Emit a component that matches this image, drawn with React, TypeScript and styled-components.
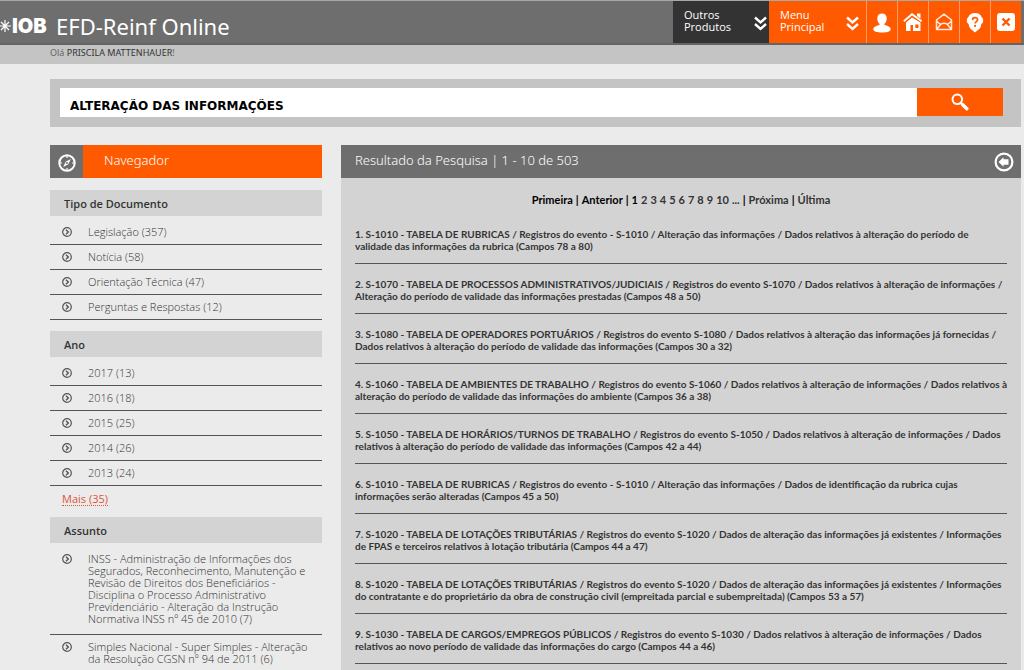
import React from "react";
import styled, { createGlobalStyle } from "styled-components";

const orange = "#ff5a00";
const gray = "#6e6e6e";

const GlobalStyle = createGlobalStyle`
  *, *::before, *::after { box-sizing: border-box; }
  body { margin: 0; background: #ebebeb; color: #333; font-family: "Noto Sans", "Open Sans", sans-serif; }
  a { color: inherit; text-decoration: none; }
  button { border: 0; padding: 0; font: inherit; cursor: pointer; }
  ul, ol { list-style: none; margin: 0; padding: 0; }
  h1, h2, h3 { margin: 0; font-weight: 400; }
`;

const Page = styled.div`
  display: flex;
  flex-direction: column;
  height: 100vh;
  overflow: hidden;
`;

const TopBar = styled.header`
  display: flex;
  flex: none;
  height: 45px;
  padding-right: 3px;
  background: ${gray};
  border-top: 1px solid #a5a9a8;
  border-bottom: 2px solid #646464;
`;

const Brand = styled.div`
  display: flex;
  align-items: center;
  flex: 1;
  padding-top: 8px;
  color: #fff;
  white-space: nowrap;
`;

const LogoText = styled.span`
  width: 44px;
  font: 900 20px/24px Inter, sans-serif;
`;

const Title = styled.h1`
  font-size: 22px;
  line-height: 28px;
`;

const Nav = styled.nav`
  display: flex;
  color: #fff;
`;

const MenuButton = styled.button<{ $dark?: boolean }>`
  display: flex;
  align-items: center;
  justify-content: space-between;
  width: ${(p) => (p.$dark ? 96 : 97)}px;
  padding: 0 ${(p) => (p.$dark ? 2 : 7)}px 2px 11px;
  background: ${(p) => (p.$dark ? "#333" : orange)};
  color: #fff;
  font-family: "Open Sans", sans-serif;
  font-size: 11px;
  line-height: 12px;
  text-align: left;
  svg { margin-top: 5px; }
`;

const IconButton = styled.button`
  display: flex;
  align-items: center;
  justify-content: center;
  width: 31px;
  background: ${orange};
  border-left: 1px solid #ff9c66;
  color: #fff;
`;

const Greeting = styled.p`
  flex: none;
  height: 19px;
  margin: 0 0 15px;
  padding-left: 50px;
  background: #c4c4c4;
  font-size: 9px;
  line-height: 16px;
`;

const Soft = styled.span`
  color: #666;
`;

const SearchForm = styled.form`
  display: flex;
  flex: none;
  margin: 0 3px 18px 50px;
  padding: 9px 18px 10px 10px;
  background: #c4c4c4;
`;

const SearchInput = styled.input`
  flex: 1;
  min-width: 0;
  height: 29px;
  padding: 7px 10px 0;
  border: 0;
  border-radius: 0;
  background: #fff;
  color: #000;
  font: 700 12px "DejaVu Sans", sans-serif;
`;

const SearchButton = styled.button`
  display: flex;
  align-items: center;
  justify-content: center;
  width: 86px;
  height: 28px;
  background: ${orange};
`;

const Columns = styled.div`
  display: flex;
  flex: 1;
  gap: 19px;
  min-height: 0;
  padding: 0 3px 0 50px;
`;

const Sidebar = styled.aside`
  flex: 0 0 272px;
`;

const PanelHead = styled.div<{ $color: string }>`
  display: flex;
  align-items: center;
  height: 33px;
  background: ${(p) => p.$color};
  color: #fff;
`;

const CompassBox = styled.span`
  display: flex;
  align-items: center;
  justify-content: center;
  width: 33px;
  height: 33px;
  padding-top: 3px;
  background: ${gray};
`;

const PanelTitle = styled.h2<{ $indent: number }>`
  flex: 1;
  padding: 0 0 4px ${(p) => p.$indent}px;
  font-size: 13px;
  font-weight: 300;
  line-height: 20px;
`;

const Group = styled.section`
  margin-top: 12px;
  & + & { margin-top: 11px; }
`;

const GroupTitle = styled.h3`
  height: 26px;
  padding: 2px 14px 0;
  background: #d3d3d3;
  font-family: "Open Sans", sans-serif;
  font-size: 11px;
  font-weight: 600;
  line-height: 24px;
`;

const FacetList = styled.ul`
  padding-top: 4px;
`;

const Facet = styled.li<{ $long?: boolean }>`
  display: flex;
  gap: 16px;
  padding: ${(p) => (p.$long ? "6px 0 9px 12px" : "6px 0 6px 12px")};
  border-bottom: 1px solid #555;
  color: #333;
  font-family: "Open Sans", sans-serif;
  font-size: 11px;
  font-weight: 300;
  line-height: 12px;
  white-space: pre;
  svg { flex: none; margin-top: 1px; }
`;

const More = styled.a`
  display: block;
  width: fit-content;
  margin: 6px 0 0 12px;
  border-bottom: 1px dotted #d9563a;
  font-family: "Open Sans", sans-serif;
  font-size: 11px;
  line-height: 13px;
  && { color: #d9563a; }
`;

const Results = styled.main`
  flex: 1;
  min-width: 0;
  background: #d3d3d3;
`;

const BackButton = styled.button`
  display: flex;
  margin-right: 7px;
  background: none;
`;

const Pager = styled.nav`
  display: flex;
  justify-content: center;
  gap: 3px;
  padding: 14px 0 13px;
  font-family: Lato, sans-serif;
  font-size: 11px;
  font-weight: 700;
  line-height: 16px;
  strong { color: #000; font-weight: 700; }
`;

const ResultList = styled.ol`
  padding: 0 14px;
`;

const Result = styled.li`
  padding: 14px 0 11px;
  border-bottom: 1px solid #555;
  font-family: Lato, sans-serif;
  font-size: 10px;
  font-weight: 700;
  line-height: 12px;
  white-space: pre;
  &:first-child { padding-top: 7px; }
`;

const Chevrons = () => (
  <svg width="13" height="15" viewBox="0 0 13 15" fill="none" stroke="#fff" strokeWidth="2.4">
    <path d="M1 1.500 6.500 6.500 12 1.500M1 8 6.500 13 12 8" />
  </svg>
);

const Star = () => (
  <svg width="12" height="16" viewBox="0 0 12 16" stroke="#fff" strokeWidth="1.2">
    <path d="M5 2v12M0 8h11M1 4l8 8M1 12l8-8" />
  </svg>
);

const Bullet = () => (
  <svg width="10" height="10" viewBox="0 0 10 10" fill="none" stroke="#555">
    <circle cx="5" cy="5" r="4.3" strokeWidth="1.2" />
    <path d="M4 2.7 6.3 5 4 7.3" strokeWidth="1.4" />
  </svg>
);

const Compass = () => (
  <svg width="20" height="20" viewBox="0 0 20 20" fill="none" stroke="#fff">
    <circle cx="10" cy="10" r="7.7" strokeWidth="2" />
    <path d="M10 2v3M10 15v3M2 10h3M15 10h3" strokeWidth="1.2" />
    <path d="m13.8 6-2.5 5.3L6.2 14l2.5-5.3z" fill="#fff" stroke="none" />
    <circle cx="10" cy="10" r="1" fill={gray} stroke="none" />
  </svg>
);

const Back = () => (
  <svg width="20" height="20" viewBox="0 0 20 20">
    <circle cx="10" cy="10" r="8.4" fill="none" stroke="#fff" strokeWidth="2.2" />
    <path d="m4.5 10 5-4.7v2h5v5.4h-5v2z" fill="#fff" />
  </svg>
);

const Magnifier = () => (
  <svg width="18" height="18" viewBox="0 0 18 18" fill="none" stroke="#fff">
    <circle cx="6.3" cy="6.3" r="4.8" strokeWidth="2" />
    <path d="m10 10 1.5 1.5" strokeWidth="2" />
    <path d="m11.5 11.5 4.3 4.3" strokeWidth="3.4" strokeLinecap="round" />
  </svg>
);

const User = () => (
  <svg width="18" height="22" viewBox="0 0 18 22" fill="#fff">
    <path d="M9 2.500c3 0 4.700 1.800 4.700 5 0 2.500-1 4.300-2.200 5.300v1.200c2.700.8 6.200 1.500 6.200 4.200 0 2.400-3.800 3.300-8.700 3.300S.3 20.600.3 18.200c0-2.700 3.500-3.400 6.200-4.200v-1.200C5.300 11.800 4.300 10 4.300 7.500 4.300 4.300 6 2.500 9 2.500z" />
  </svg>
);

const House = () => (
  <svg width="20" height="20" viewBox="0 0 20 20">
    <path d="M.8 9.3 9 2.2l9.600 7.100" fill="none" stroke="#fff" strokeWidth="1.8" />
    <path d="M14 1.500h3.500v5L14 4z" fill="#fff" />
    <path d="M9 5.500 3 10.500V19h4.500v-6H10v6h7.500v-8.500zM12.300 12.500h3.200V16h-3.200z" fill="#fff" fillRule="evenodd" />
  </svg>
);

const Mail = () => (
  <svg width="18" height="18" viewBox="0 0 18 18" fill="none" stroke="#ffe9dc" strokeWidth="1.5" strokeLinejoin="round">
    <path d="M1.500 7 9 1.200 16.500 7v9.500h-15zM1.500 8l4 3.500M16.500 8l-4 3.500M1.500 16.500l4-5c2-1.500 5-1.500 7 0l4 5" />
  </svg>
);

const Help = () => (
  <svg width="18" height="21" viewBox="0 0 18 21">
    <path d="M9 1c3.800 0 6 1.600 6.700 4.300C17 6 17.500 8 17 10c-.3 1.200-1 1.800-1.600 2-.4 3-1.600 5-3.400 6L9 20.500 6 18c-1.800-1-3-3-3.400-6C2 11.800 1.300 11.200 1 10c-.5-2 0-4 1.300-4.700C3 2.600 5.200 1 9 1z" fill="#fff" />
    <path d="M6.500 8C6.500 4.900 11.600 4.900 11.600 7.800c0 2-2.500 1.700-2.500 3.800" fill="none" stroke={orange} strokeWidth="1.7" />
    <circle cx="9.1" cy="13.900" r="1.100" fill={orange} />
  </svg>
);

const Close = () => (
  <svg width="18" height="18" viewBox="0 0 18 18">
    <rect width="18" height="18" rx="3" fill="#fff" />
    <path d="m5.500 5.500 7 7M12.500 5.500l-7 7" stroke={orange} strokeWidth="2.4" />
  </svg>
);

const tools = [
  { label: "Usuário", Icon: User },
  { label: "Início", Icon: House },
  { label: "Mensagens", Icon: Mail },
  { label: "Ajuda", Icon: Help },
  { label: "Sair", Icon: Close },
];

const groups = [
  {
    title: "Tipo de Documento",
    items: ["Legislação (357)", "Notícia (58)", "Orientação Técnica (47)", "Perguntas e Respostas (12)"],
  },
  {
    title: "Ano",
    items: ["2017 (13)", "2016 (18)", "2015 (25)", "2014 (26)", "2013 (24)"],
    more: "Mais (35)",
  },
  {
    title: "Assunto",
    long: true,
    items: [
      "INSS - Administração de Informações dos\nSegurados, Reconhecimento, Manutenção e\nRevisão de Direitos dos Beneficiários -\nDisciplina o Processo Administrativo\nPrevidenciário - Alteração da Instrução\nNormativa INSS nº 45 de 2010 (7)",
      "Simples Nacional - Super Simples - Alteração\nda Resolução CGSN nº 94 de 2011 (6)",
    ],
  },
];

const results = [
  "1. S-1010 - TABELA DE RUBRICAS / Registros do evento - S-1010 / Alteração das informações / Dados relativos à alteração do período de\nvalidade das informações da rubrica (Campos 78 a 80)",
  "2. S-1070 - TABELA DE PROCESSOS ADMINISTRATIVOS/JUDICIAIS / Registros do evento S-1070 / Dados relativos à alteração de informações /\nAlteração do período de validade das informações prestadas (Campos 48 a 50)",
  "3. S-1080 - TABELA DE OPERADORES PORTUÁRIOS / Registros do evento S-1080 / Dados relativos à alteração das informações já fornecidas /\nDados relativos à alteração do período de validade das informações (Campos 30 a 32)",
  "4. S-1060 - TABELA DE AMBIENTES DE TRABALHO / Registros do evento S-1060 / Dados relativos à alteração de informações / Dados relativos à\nalteração do período de validade das informações do ambiente (Campos 36 a 38)",
  "5. S-1050 - TABELA DE HORÁRIOS/TURNOS DE TRABALHO / Registros do evento S-1050 / Dados relativos à alteração de informações / Dados\nrelativos à alteração do período de validade das informações (Campos 42 a 44)",
  "6. S-1010 - TABELA DE RUBRICAS / Registros do evento - S-1010 / Alteração das informações / Dados de identificação da rubrica cujas\ninformações serão alteradas (Campos 45 a 50)",
  "7. S-1020 - TABELA DE LOTAÇÕES TRIBUTÁRIAS / Registros do evento S-1020 / Dados de alteração das informações já existentes / Informações\nde FPAS e terceiros relativos à lotação tributária (Campos 44 a 47)",
  "8. S-1020 - TABELA DE LOTAÇÕES TRIBUTÁRIAS / Registros do evento S-1020 / Dados de alteração das informações já existentes / Informações\ndo contratante e do proprietário da obra de construção civil (empreitada parcial e subempreitada) (Campos 53 a 57)",
  "9. S-1030 - TABELA DE CARGOS/EMPREGOS PÚBLICOS / Registros do evento S-1030 / Dados relativos à alteração de informações / Dados\nrelativos ao novo período de validade das informações do cargo (Campos 44 a 46)",
];

const pages = ["2", "3", "4", "5", "6", "7", "8", "9", "10"];

export default function App() {
  return (
    <Page>
      <GlobalStyle />
      <TopBar>
        <Brand>
          <Star />
          <LogoText>IOB</LogoText>
          <Title>EFD-Reinf Online</Title>
        </Brand>
        <Nav>
          <MenuButton type="button" $dark>
            <span>Outros<br />Produtos</span>
            <Chevrons />
          </MenuButton>
          <MenuButton type="button">
            <span>Menu<br />Principal</span>
            <Chevrons />
          </MenuButton>
          {tools.map(({ label, Icon }) => (
            <IconButton key={label} type="button" aria-label={label}>
              <Icon />
            </IconButton>
          ))}
        </Nav>
      </TopBar>
      <Greeting><Soft>Olá</Soft> PRISCILA MATTENHAUER<Soft>!</Soft></Greeting>
      <SearchForm onSubmit={(e) => e.preventDefault()}>
        <SearchInput aria-label="Pesquisa" defaultValue="ALTERAÇÃO DAS INFORMAÇÕES" />
        <SearchButton type="submit" aria-label="Pesquisar">
          <Magnifier />
        </SearchButton>
      </SearchForm>
      <Columns>
        <Sidebar>
          <PanelHead $color={orange}>
            <CompassBox><Compass /></CompassBox>
            <PanelTitle $indent={21}>Navegador</PanelTitle>
          </PanelHead>
          {groups.map((g) => (
            <Group key={g.title}>
              <GroupTitle>{g.title}</GroupTitle>
              <FacetList>
                {g.items.map((item) => (
                  <Facet key={item} $long={g.long}>
                    <Bullet />
                    <a href="#">{item}</a>
                  </Facet>
                ))}
              </FacetList>
              {g.more && <More href="#">{g.more}</More>}
            </Group>
          ))}
        </Sidebar>
        <Results>
          <PanelHead $color={gray}>
            <PanelTitle $indent={14}>Resultado da Pesquisa | 1 - 10 de 503</PanelTitle>
            <BackButton type="button" aria-label="Voltar"><Back /></BackButton>
          </PanelHead>
          <Pager>
            <strong>Primeira</strong>
            <strong>|</strong>
            <strong>Anterior</strong>
            <strong>|</strong>
            <strong>1</strong>
            {pages.map((p) => <a key={p} href="#">{p}</a>)}
            <span>...</span>
            <strong>|</strong>
            <a href="#">Próxima</a>
            <strong>|</strong>
            <a href="#">Última</a>
          </Pager>
          <ResultList>
            {results.map((r) => (
              <Result key={r}><a href="#">{r}</a></Result>
            ))}
          </ResultList>
        </Results>
      </Columns>
    </Page>
  );
}
